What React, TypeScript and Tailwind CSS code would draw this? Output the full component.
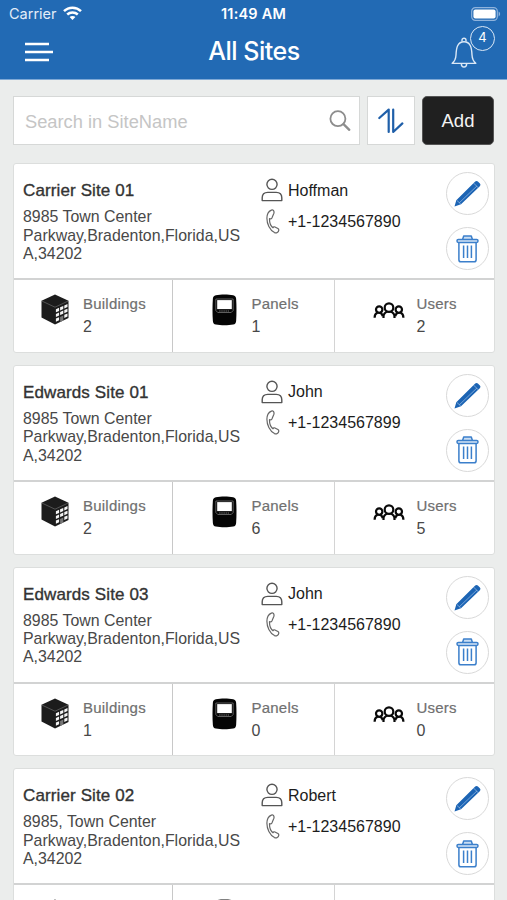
interface Site {
  name: string;
  address: string[];
  contact: string;
  phone: string;
  buildings: number;
  panels: number;
  users: number;
}

const sites: Site[] = [
  {
    name: 'Carrier Site 01',
    address: ['8985 Town Center', 'Parkway,Bradenton,Florida,US', 'A,34202'],
    contact: 'Hoffman',
    phone: '+1-1234567890',
    buildings: 2,
    panels: 1,
    users: 2,
  },
  {
    name: 'Edwards Site 01',
    address: ['8985 Town Center', 'Parkway,Bradenton,Florida,US', 'A,34202'],
    contact: 'John',
    phone: '+1-1234567899',
    buildings: 2,
    panels: 6,
    users: 5,
  },
  {
    name: 'Edwards Site 03',
    address: ['8985 Town Center', 'Parkway,Bradenton,Florida,US', 'A,34202'],
    contact: 'John',
    phone: '+1-1234567890',
    buildings: 1,
    panels: 0,
    users: 0,
  },
  {
    name: 'Carrier Site 02',
    address: ['8985, Town Center', 'Parkway,Bradenton,Florida,US', 'A,34202'],
    contact: 'Robert',
    phone: '+1-1234567890',
    buildings: 2,
    panels: 1,
    users: 2,
  },
];

function WifiIcon() {
  return (
    <svg width="19" height="15" viewBox="0 0 19 15" fill="none" stroke="white" strokeWidth="2.5">
      <path d="M1 5.2C5.7.6 13.3.6 18 5.2" />
      <path d="M4.2 8.5c3-2.8 7.6-2.8 10.6 0" />
      <path d="M9.5 14 6.6 11.1c1.6-1.5 4.2-1.5 5.8 0z" fill="white" stroke="none" />
    </svg>
  );
}

function BatteryIcon() {
  return (
    <svg width="30" height="14" viewBox="0 0 30 14" fill="none">
      <rect x="0.7" y="0.7" width="25.6" height="12.6" rx="3.6" stroke="#8fb3dc" strokeWidth="1.2" />
      <rect x="2.4" y="2.4" width="22.2" height="9.2" rx="2" fill="white" />
      <path d="M27.6 4.6c2 .8 2 4 0 4.8z" fill="#8fb3dc" />
    </svg>
  );
}

function BellIcon() {
  return (
    <svg width="26" height="31" viewBox="0 0 26 31" fill="none" stroke="#dbe8f6" strokeWidth="1.4" strokeLinejoin="round">
      <path d="M11 4.6V3.2a2 2 0 0 1 4 0v1.4" />
      <path d="M1.2 26.4c2.6-2.2 3.6-4.6 3.8-8.4.3-7 1.4-13.3 8-13.3s7.7 6.3 8 13.3c.2 3.8 1.2 6.2 3.8 8.4z" />
      <path d="M10.3 26.6c.2 4.6 5.2 4.6 5.4 0" />
    </svg>
  );
}

function SearchIcon() {
  return (
    <svg width="22" height="22" viewBox="0 0 22 22" fill="none" stroke="#8d8d8d">
      <circle cx="8.9" cy="8.7" r="7.5" strokeWidth="1.8" />
      <path d="m14.5 14.2 5.8 5.6" strokeWidth="2.3" strokeLinecap="round" />
    </svg>
  );
}

function SortIcon() {
  return (
    <svg width="26" height="26" viewBox="0 0 26 26" fill="none" stroke="#1f5fa9" strokeWidth="2.2" strokeLinecap="round" strokeLinejoin="round">
      <path d="M1.3 10 10.7 1.6V24" />
      <path d="M15.2 1.6V24l9.2-8.6" />
    </svg>
  );
}

function PersonIcon() {
  return (
    <svg width="22" height="24" viewBox="0 0 22 24" fill="none" stroke="#555" strokeWidth="1.4">
      <circle cx="11" cy="6.3" r="5.1" />
      <path d="M1.2 22.6v-2.8c0-3.6 2.6-5.4 5.6-5.4h8.4c3 0 5.6 1.8 5.6 5.4v2.8z" strokeLinejoin="round" />
    </svg>
  );
}

function PhoneIcon() {
  return (
    <svg width="14" height="25" viewBox="0 0 14 25" fill="none" stroke="#666" strokeWidth="1.2" strokeLinejoin="round">
      <path d="M5.3 1.1C1.9 2.6.9 5.4.9 9.3c0 5.4 2.7 11.5 7.6 14.3 1.9.9 4-.4 4.3-2.5 0-.7-.4-1.2-.9-1.5l-3-1.7c-.7-.4-1.4 0-1.9.9C4.7 17 3.4 13.3 3.5 9.7c1.2.3 2 0 2.4-.8l1.9-4.4c.4-1.2.2-2.4-.4-3.1-.5-.5-1.3-.7-2.1-.3z" />
    </svg>
  );
}

function PencilIcon() {
  return (
    <svg width="27" height="27" viewBox="0 0 27 27">
      <path d="M.5 26.5 2.3 20.2 21.2 1.5c.8-.8 1.9-.8 2.7-.1l2 2c.8.8.7 1.9-.1 2.8L7 24.3z" fill="#1c64b4" />
      <path d="M5.2 22.9 22.9 6M2.9 20.5l3.8 3.4M19.6 3.1l4.8 4.8" stroke="#9fc0e6" strokeWidth="0.7" fill="none" />
    </svg>
  );
}

function TrashIcon() {
  return (
    <svg width="23" height="28" viewBox="0 0 23 28" fill="none" stroke="#3b7fcb" strokeWidth="1.5" strokeLinejoin="round">
      <path d="M6.6 4.4 7.7 1.1h7.6l1.1 3.3" fill="#c9ddf3" />
      <rect x="1" y="4.4" width="21" height="3" rx="1.3" fill="#d6e5f6" />
      <path d="M2.9 7.5v17.2c0 1.3.8 2.1 2.1 2.1h13c1.3 0 2.1-.8 2.1-2.1V7.5" />
      <path d="M7.6 10.5v12.5M11.5 10.5v12.5M15.4 10.5v12.5" />
    </svg>
  );
}

function BuildingIcon() {
  return (
    <svg width="28" height="31" viewBox="0 0 28 31">
      <path d="M14 .5 27.5 6.8V24L14 30.5.5 23.5V6.8z" fill="#1c1c1c" />
      <path d="M.8 7 14 13.2 27.2 7" stroke="#777" strokeWidth="0.6" fill="none" />
      <g fill="#f4f4f4">
        <path d="m14.9 15.2 3.2-1.4v3.1l-3.2 1.4zM19.1 13.3l3.2-1.4V15l-3.2 1.4zM23.3 11.4l3.2-1.4v3.1l-3.2 1.4z" />
        <path d="m14.9 19.9 3.2-1.4v3.1l-3.2 1.4zM19.1 18l3.2-1.4v3.1l-3.2 1.4zM23.3 16.1l3.2-1.4v3.1l-3.2 1.4z" />
        <path d="m14.9 24.6 3.2-1.4v3.1l-3.2 1.4zM23.3 20.8l3.2-1.4v3.1l-3.2 1.4z" />
      </g>
      <path d="m19.1 22.9 3.2-1.4v4.9l-3.2 1.5z" fill="#777" />
    </svg>
  );
}

function PanelIcon() {
  return (
    <svg width="25" height="32" viewBox="0 0 26 32" preserveAspectRatio="none">
      <path d="M4 1.3C9 .3 17 .3 22 1.3c2 .4 3 1.5 3.1 3.5.5 7 .5 15 0 22.2-.1 2-1.1 3.3-3.1 3.6-5 .9-13 .9-18 0-2-.3-3-1.6-3.1-3.6C.4 19.8.4 11.8.9 4.8 1 2.8 2 1.7 4 1.3z" fill="#050505" />
      <path d="M4 5h18v11.5l-2 2H6l-2-2z" fill="none" stroke="#777" strokeWidth="0.8" />
      <rect x="5.4" y="6.1" width="15.2" height="9" fill="white" />
      <path d="M7.5 17h11" stroke="#777" strokeWidth="1.2" strokeDasharray="1.4 .8" />
    </svg>
  );
}

function UsersIcon() {
  return (
    <svg width="32" height="17" viewBox="0 0 32 17" fill="none" stroke="#0a0a0a" strokeWidth="2.2">
      <circle cx="16" cy="5.6" r="4.3" />
      <path d="M10.5 16v-1.2c0-2.6 1.5-4.3 3.7-5M21.5 16v-1.2c0-2.6-1.5-4.3-3.7-5" />
      <circle cx="6.2" cy="7.6" r="3.2" />
      <circle cx="25.8" cy="7.6" r="3.2" />
      <path d="M1.6 15.8c0-2.6 1-4.4 3-5M9.8 14.3c-.4-1.8-1.2-2.9-2.4-3.6M30.4 15.8c0-2.6-1-4.4-3-5M22.2 14.3c.4-1.8 1.2-2.9 2.4-3.6" />
    </svg>
  );
}

function SiteCard({ site }: { site: Site }) {
  return (
    <div className="h-[189.67px] shrink-0 rounded-[3px] border border-[#dcdedd] bg-white">
      <div className="flex h-[116px] border-b-2 border-[#d2d3d3]">
        <div className="w-[247px] pt-[17px] pl-[9px]">
          <h2 className="text-[17px] leading-5 tracking-[0.12px] text-[#333] [-webkit-text-stroke:0.35px_#333]">{site.name}</h2>
          <div className="mt-[7px] text-[15.9px] leading-[18.4px] text-[#484848]">
            {site.address.map((line) => (
              <p key={line}>{line}</p>
            ))}
          </div>
        </div>
        <div className="flex-1 pt-[13.5px] text-base leading-6 text-[#1c1c1c]">
          <div className="flex items-center gap-[5px]">
            <PersonIcon />
            <span className="pt-px">{site.contact}</span>
          </div>
          <div className="mt-[6px] flex items-center gap-[8px] pl-[5px]">
            <PhoneIcon />
            <span className="pt-px">{site.phone}</span>
          </div>
        </div>
        <div className="flex w-[48px] flex-col gap-[12px] pt-[8px]">
          <button className="flex size-[43px] items-center justify-center rounded-full border border-[#d9d9d9]">
            <PencilIcon />
          </button>
          <button className="flex size-[43px] items-center justify-center rounded-full border border-[#d9d9d9]">
            <TrashIcon />
          </button>
        </div>
      </div>
      <div className="flex h-[71.67px]">
        <div className="flex w-[159px] border-r border-[#c8c8c8] pt-[14px] pl-[27px]">
          <BuildingIcon />
          <Stat label="Buildings" value={site.buildings} />
        </div>
        <div className="flex w-[162px] border-r border-[#d4d4d4] pt-[14px] pl-[38.5px]">
          <PanelIcon />
          <div className="ml-[1px]">
            <Stat label="Panels" value={site.panels} />
          </div>
        </div>
        <div className="flex pt-[14px] pl-[38px]">
          <div className="pt-[8px]">
            <UsersIcon />
          </div>
          <div className="-ml-[2.5px]">
            <Stat label="Users" value={site.users} />
          </div>
        </div>
      </div>
    </div>
  );
}

function Stat({ label, value }: { label: string; value: number }) {
  return (
    <div className="ml-[14px]">
      <p className="text-[15px] leading-5 tracking-[0.22px] text-[#707070] [-webkit-text-stroke:0.2px_#707070]">{label}</p>
      <p className="mt-[3px] text-base leading-5 text-[#484848]">{value}</p>
    </div>
  );
}

export default function App() {
  return (
    <div className="flex h-[900px] w-[507px] flex-col overflow-hidden bg-[#ebedec] font-['Liberation_Sans',sans-serif]">
      <header className="h-[80px] shrink-0 border-b border-[#7fa9d6] bg-[#226ab4] font-['Inter',sans-serif] text-white">
        <div className="grid h-[27px] grid-cols-3 items-center pr-[6px] pl-[9px]">
          <div className="flex items-center gap-[6px] text-[14.5px] text-[#e3edf8]">
            <span>Carrier</span>
            <WifiIcon />
          </div>
          <span className="pt-px pr-[3px] text-center text-[14.5px] font-semibold tracking-[0.2px]">11:49 AM</span>
          <div className="flex justify-end">
            <BatteryIcon />
          </div>
        </div>
        <div className="grid h-[50px] grid-cols-3 items-center pr-[12px] pl-[25px]">
          <svg width="28" height="20" viewBox="0 0 28 20" stroke="white" strokeWidth="2.4">
            <path d="M0 2h24M0 10h28M0 18h24" />
          </svg>
          <h1 className="pr-[12px] text-center text-[25px] font-medium tracking-[-0.5px] whitespace-nowrap">All Sites</h1>
          <div className="relative flex justify-end pr-[18px]">
            <BellIcon />
            <span className="absolute -top-[11px] right-0 flex size-[25px] items-center justify-center rounded-full border-[1.5px] border-[#dbe8f6] bg-[#226ab4] text-[13px]">
              4
            </span>
          </div>
        </div>
      </header>

      <main className="pt-4 pr-3 pl-[13px]">
        <div className="flex gap-[7px]">
          <div className="flex h-[49px] w-[347px] items-center justify-between border border-[#d6d8d7] bg-white pr-[8px] pl-[11px]">
            <span className="pt-[2px] text-[18.3px] text-[#c5c5c5]">Search in SiteName</span>
            <SearchIcon />
          </div>
          <button className="flex h-[49px] w-[48px] items-center justify-center border border-[#d6d8d7] bg-white">
            <SortIcon />
          </button>
          <button className="h-[49px] w-[72px] rounded-[5px] border border-[#555] bg-[#202020] pt-px text-[18.5px] text-[#f3f3f3]">Add</button>
        </div>

        <div className="mt-[18.3px] flex flex-col gap-3">
          {sites.map((site) => (
            <SiteCard key={site.name} site={site} />
          ))}
        </div>
      </main>
    </div>
  );
}
